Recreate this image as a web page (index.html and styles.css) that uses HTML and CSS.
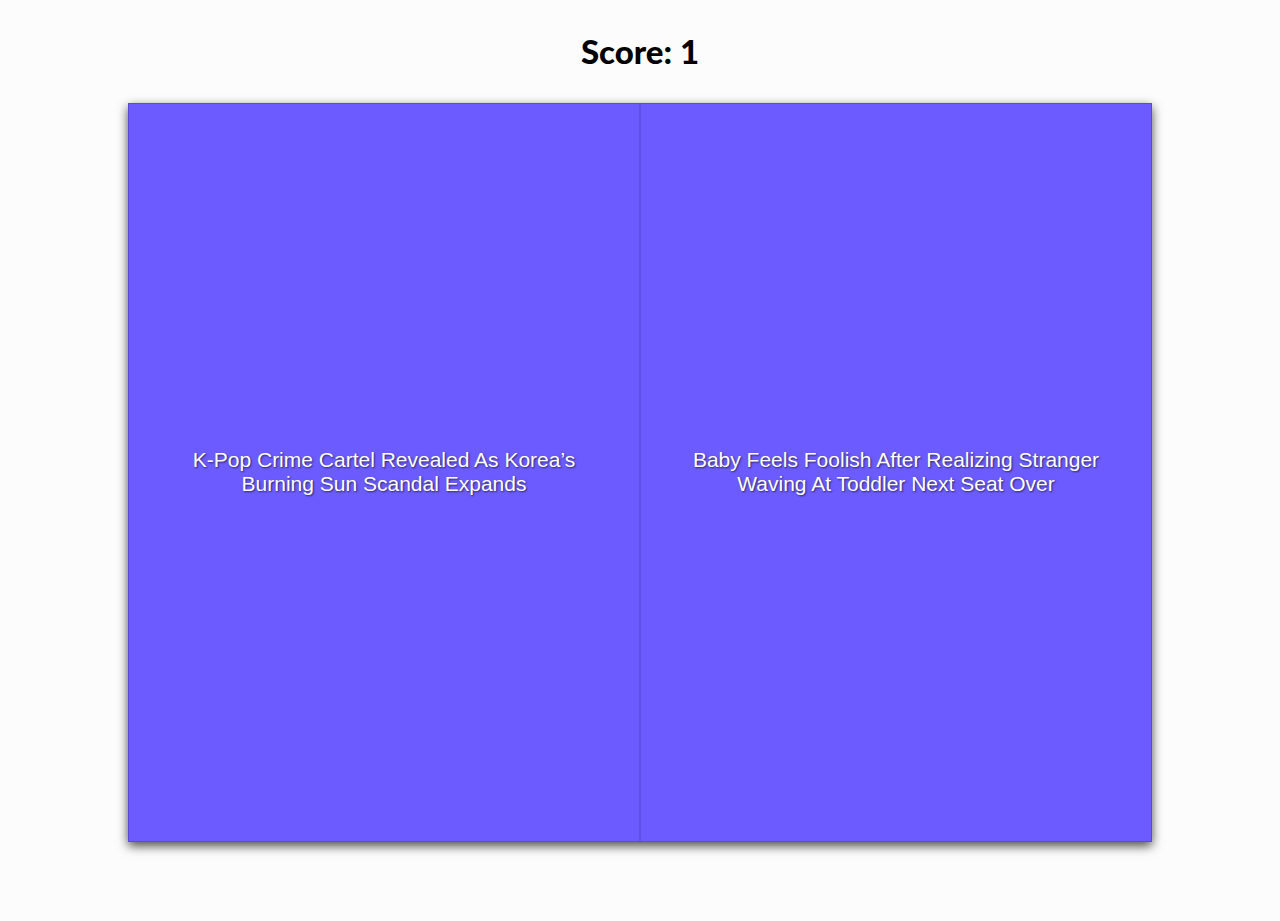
FILE: index.html
```html
<!DOCTYPE html>
<html>
<head>
<meta charset="utf-8">
<link rel="stylesheet" href="styles.css">
</head>
<body>
<h1 class="score">Score: 1</h1>
<div class="board">
  <div class="option"><p class="headline">K-Pop Crime Cartel Revealed As Korea’s Burning Sun Scandal Expands</p></div>
  <div class="option"><p class="headline">Baby Feels Foolish After Realizing Stranger Waving At Toddler Next Seat Over</p></div>
</div>
</body>
</html>
```

FILE: styles.css
```css
html, body { margin: 0; padding: 0; background: #fcfcfc; }
body { font-family: "Liberation Sans", Arial, sans-serif; min-height: 921px; box-sizing: border-box; padding-bottom: 79px; }
.score {
  margin: 0;
  padding-top: 33px;
  height: 70px;
  box-sizing: border-box;
  text-align: center;
  font-family: Lato, "Open Sans", sans-serif;
  font-weight: 900;
  font-size: 33px;
  line-height: 36px;
  color: #000;
}
.board {
  width: 1024px;
  height: 739px;
  margin: 33px auto 0;
  box-sizing: border-box;
  display: flex;
  background: #6c5cff;
  border: 1px solid #5a4ad6;
  box-shadow: 0 4px 10px rgba(0,0,0,0.7);
}
.option {
  flex: 1;
  display: flex;
  align-items: center;
  justify-content: center;
  padding: 0 48px 2px;
}
.option + .option { border-left: 2px solid #6150e6; }
.headline {
  margin: 0;
  color: #fff;
  font-size: 21px;
  line-height: 24px;
  text-align: center;
  text-shadow: 1px 1px 2px rgba(0,0,0,0.6);
}
```
